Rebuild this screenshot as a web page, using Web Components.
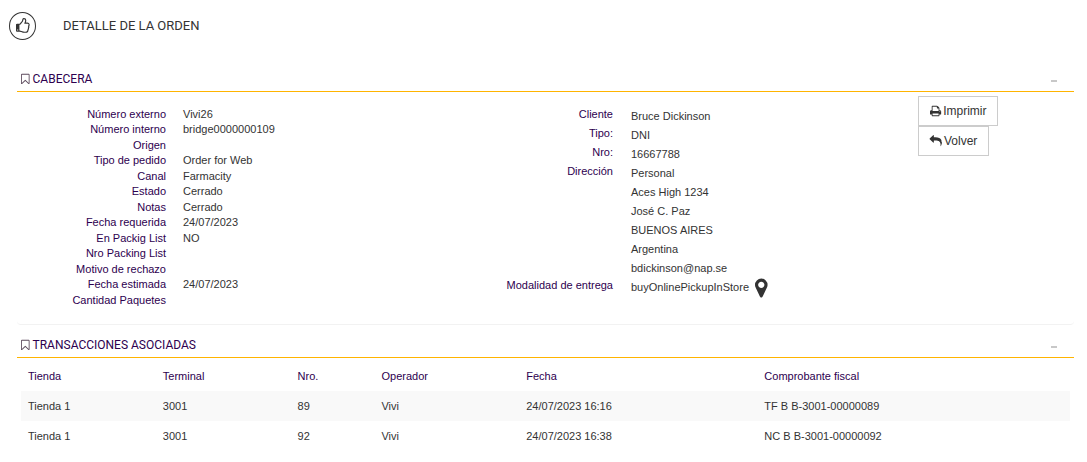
<!DOCTYPE html>
<html lang="es">
<head>
<meta charset="utf-8">
<title>Detalle de la orden</title>
<style>
	body {
		margin: 0;
		background: #fff;
		color: #333;
		font: 11px/15px "Liberation Sans", Arial, sans-serif;
		--label: #2d004f;
		--accent: #ffb400;
	}
	main {
		padding: 0 13px 0 17px;
	}
</style>
</head>
<body>
<page-title icon="thumbs">DETALLE DE LA ORDEN</page-title>
<main>
	<info-panel heading="CABECERA">
		<order-header></order-header>
	</info-panel>
	<info-panel heading="TRANSACCIONES ASOCIADAS">
		<transaction-table></transaction-table>
	</info-panel>
</main>

<script>
const ICONS = {
	thumbs: ['0 0 1536 1792', 'M256 1344q0-26-19-45t-45-19-45 19-19 45 19 45 45 19 45-19 19-45zm1152-576q0-51-39-89.5t-89-38.5h-352q0-58 48-159.5t48-160.5q0-98-32-145t-128-47q-26 26-38 85t-30.5 125.5-59.5 109.5q-22 23-77 91-4 5-23 30t-31.5 41-34.5 42.5-40 44-38.5 35.5-40 27-35.5 9h-32v640h32q13 0 31.5 3t33 6.5 38 11 35 11.5 35.5 12.5 29 10.5q211 73 342 73h121q192 0 192-167 0-26-5-56 30-16 47.5-52.5t17.5-73.5-18-69q53-50 53-119 0-25-10-55.5t-25-47.5q32-1 53.5-47t21.5-81zm128-1q0 89-49 163 9 33 9 69 0 77-38 144 3 21 3 43 0 101-60 178 1 139-85 219.5t-227 80.5h-129q-96 0-189.5-22.5t-216.5-65.5q-116-40-138-40h-288q-53 0-90.5-37.5t-37.5-90.5v-640q0-53 37.5-90.5t90.5-37.5h274q36-24 137-155 58-75 107-128 24-25 35.5-85.5t30.5-126.5 62-108q39-37 90-37 84 0 151 32.5t102 101.5 35 186q0 93-48 192h176q104 0 180 76t76 179z'],
	bookmark: ['0 0 1280 1792', 'M1152 256h-1024v1242l423-406 89-85 89 85 423 406v-1242zm12-128q23 0 44 9 33 13 52.5 41t19.5 62v1289q0 34-19.5 62t-52.5 41q-19 8-44 8-48 0-83-32l-441-424-441 424q-36 33-83 33-23 0-44-9-33-13-52.5-41t-19.5-62v-1289q0-34 19.5-62t52.5-41q21-9 44-9h1048z'],
	print: ['0 0 1664 1792', 'M384 1536h896v-256h-896v256zm0-640h896v-384h-160q-40 0-68-28t-28-68v-160h-640v640zm1152 64q0-26-19-45t-45-19-45 19-19 45 19 45 45 19 45-19 19-45zm128 0v416q0 13-9.5 22.5t-22.5 9.5h-224v160q0 40-28 68t-68 28h-960q-40 0-68-28t-28-68v-160h-224q-13 0-22.5-9.5t-9.5-22.5v-416q0-79 56.5-135.5t135.5-56.5h64v-544q0-40 28-68t68-28h672q40 0 88 20t76 48l152 152q28 28 48 76t20 88v256h64q79 0 135.5 56.5t56.5 135.5z'],
	reply: ['0 0 1792 1792', 'M1792 1120q0 166-127 451-3 7-10.5 24t-13.5 30-13 22q-12 17-28 17-15 0-23.5-10t-8.5-25q0-9 2.5-26.5t2.5-23.5q5-68 5-123 0-112-19.5-200.5t-54-153.5-89-112-117.5-79.5-147-47-164-24.5-188-7h-224v256q0 26-19 45t-45 19-45-19l-512-512q-19-19-19-45t19-45l512-512q19-19 45-19t45 19 19 45v256h224q713 0 875 403 53 134 53 333z'],
	marker: ['0 0 1024 1792', 'M768 640q0-106-75-181t-181-75-181 75-75 181 75 181 181 75 181-75 75-181zm256 0q0 109-33 179l-364 774q-16 33-47.5 52t-67.5 19-67.5-19-46.5-52l-365-774q-33-70-33-179 0-212 150-362t362-150 362 150 150 362z'],
};

const ORDER = [
	['Número externo', 'Vivi26'],
	['Número interno', 'bridge0000000109'],
	['Origen', ''],
	['Tipo de pedido', 'Order for Web'],
	['Canal', 'Farmacity'],
	['Estado', 'Cerrado'],
	['Notas', 'Cerrado'],
	['Fecha requerida', '24/07/2023'],
	['En Packig List', 'NO'],
	['Nro Packing List', ''],
	['Motivo de rechazo', ''],
	['Fecha estimada', '24/07/2023'],
	['Cantidad Paquetes', ''],
];

const CUSTOMER = [
	['Cliente', 'Bruce Dickinson'],
	['Tipo:', 'DNI'],
	['Nro:', '16667788'],
	['Dirección', 'Personal', 'Aces High 1234', 'José C. Paz', 'BUENOS AIRES', 'Argentina', 'bdickinson@nap.se'],
	['Modalidad de entrega', 'buyOnlinePickupInStore<fa-icon name="marker"></fa-icon>'],
];

const COLUMNS = ['Tienda', 'Terminal', 'Nro.', 'Operador', 'Fecha', 'Comprobante fiscal'];

const TRANSACTIONS = [
	['Tienda 1', '3001', '89', 'Vivi', '24/07/2023 16:16', 'TF B B-3001-00000089'],
	['Tienda 1', '3001', '92', 'Vivi', '24/07/2023 16:38', 'NC B B-3001-00000092'],
];

class FaIcon extends HTMLElement {
	constructor() {
		super();
		this.attachShadow({ mode: 'open' });
	}

	connectedCallback() {
		const [viewBox, path] = ICONS[this.getAttribute('name')];
		this.shadowRoot.innerHTML = /* html */`
<style>
	:host {
		display: inline-flex;
		flex: none;
		height: 12px;
	}
	svg {
		height: 100%;
		fill: currentColor;
		overflow: visible;
	}
</style>
<svg viewBox="${viewBox}" aria-hidden="true"><path d="${path}"/></svg>
`;
	}
}

class PageTitle extends HTMLElement {
	constructor() {
		super();
		this.attachShadow({ mode: 'open' }).innerHTML = /* html */`
<style>
	:host {
		display: flex;
		align-items: center;
		gap: 27px;
		padding: 12px 9px 25px;
	}
	.badge {
		display: flex;
		align-items: center;
		justify-content: center;
		box-sizing: border-box;
		width: 27px;
		height: 28px;
		border: 1px solid #333;
		border-radius: 50%;
	}
	fa-icon {
		height: 16px;
	}
	h1 {
		margin: 0;
		font: 400 13px/20px Roboto, sans-serif;
	}
</style>
<span class="badge"><fa-icon name="${this.getAttribute('icon') || 'thumbs'}"></fa-icon></span>
<h1><slot></slot></h1>
`;
	}
}

class InfoPanel extends HTMLElement {
	constructor() {
		super();
		this.attachShadow({ mode: 'open' });
	}

	connectedCallback() {
		this.shadowRoot.innerHTML = /* html */`
<style>
	:host {
		display: block;
	}
	section {
		border-bottom: 1px solid #f2f2f2;
		border-radius: 4px;
	}
	header {
		display: flex;
		align-items: center;
		justify-content: space-between;
		box-sizing: border-box;
		height: 27px;
		padding: 2px 17px 0 4px;
		border-bottom: 1px solid var(--accent);
	}
	:host(:not(:first-child)) header {
		height: 33px;
		padding-top: 8px;
	}
	:host(:last-child) section {
		border-bottom: none;
	}
	h2 {
		display: flex;
		align-items: center;
		gap: 3px;
		margin: 0;
		color: var(--label);
		font: 400 12px/16px Roboto, sans-serif;
	}
	h2 fa-icon {
		color: #5c4a5c;
	}
	button {
		display: flex;
		align-items: center;
		width: 6px;
		height: 16px;
		padding: 3px 0 0;
		border: none;
		background: none;
		cursor: pointer;
	}
	button::before {
		content: "";
		flex: 1;
		height: 2px;
		background: #c8c8c8;
	}
	[hidden] {
		display: none;
	}
</style>
<section>
	<header>
		<h2><fa-icon name="bookmark"></fa-icon>${this.getAttribute('heading')}</h2>
		<button type="button" aria-label="Contraer" aria-expanded="true"></button>
	</header>
	<div class="body"><slot></slot></div>
</section>
`;
		const button = this.shadowRoot.querySelector('button');
		const body = this.shadowRoot.querySelector('.body');
		button.addEventListener('click', () => {
			body.hidden = !body.hidden;
			button.setAttribute('aria-expanded', String(!body.hidden));
		});
	}
}

class OrderHeader extends HTMLElement {
	constructor() {
		super();
		const group = ([label, ...values]) => `<dt>${label}</dt>${values.map((value) => `<dd>${value}</dd>`).join('')}`;
		this.attachShadow({ mode: 'open' }).innerHTML = /* html */`
<style>
	:host {
		display: grid;
		grid-template-columns: 447fr 454fr 156fr;
		padding: 4px 0 16px;
	}
	dl {
		display: grid;
		grid-template-columns: 149px 1fr;
		column-gap: 17px;
		margin: 11px 0 0;
	}
	/* the order list spreads its rows over the height of the row */
	.order {
		grid-auto-rows: 1fr;
	}
	.customer {
		grid-auto-rows: 19px;
		column-gap: 18px;
		padding-bottom: 11px;
	}
	dt {
		grid-column: 1;
		color: var(--label);
		text-align: right;
	}
	dd {
		grid-column: 2;
		margin: 0;
	}
	.customer dd {
		display: flex;
		align-items: center;
		gap: 6px;
		line-height: 19px;
	}
	dd fa-icon {
		height: 22px;
	}
	.actions {
		display: flex;
		flex-direction: column;
		align-items: flex-start;
	}
	button {
		display: flex;
		align-items: center;
		gap: 2px;
		height: 30px;
		padding: 0 11px;
		border: 1px solid #ccc;
		background: #fff;
		color: #333;
		font: 12px/16px "Liberation Sans", Arial, sans-serif;
		cursor: pointer;
	}
</style>
<dl class="order">${ORDER.map(group).join('')}</dl>
<dl class="customer">${CUSTOMER.map(group).join('')}</dl>
<div class="actions">
	<button type="button"><fa-icon name="print"></fa-icon>Imprimir</button>
	<button type="button"><fa-icon name="reply"></fa-icon>Volver</button>
</div>
`;
	}
}

class TransactionTable extends HTMLElement {
	constructor() {
		super();
		const row = (cells) => `<tr>${cells.map((cell) => `<td>${cell}</td>`).join('')}</tr>`;
		this.attachShadow({ mode: 'open' }).innerHTML = /* html */`
<style>
	:host {
		display: block;
		padding: 3px 4px;
	}
	table {
		width: 100%;
		border-collapse: collapse;
		table-layout: fixed;
	}
	th, td {
		box-sizing: border-box;
		height: 30px;
		padding: 0 7px;
		text-align: left;
		font-weight: 400;
	}
	th {
		color: var(--label);
	}
	th:nth-child(1), th:nth-child(2) { width: 12.85%; }
	th:nth-child(3) { width: 8%; }
	th:nth-child(4) { width: 13.8%; }
	th:nth-child(5) { width: 22.7%; }
	tbody tr:nth-child(odd) {
		background: #f9f9f9;
	}
</style>
<table>
	<thead><tr>${COLUMNS.map((name) => `<th scope="col">${name}</th>`).join('')}</tr></thead>
	<tbody>${TRANSACTIONS.map(row).join('')}</tbody>
</table>
`;
	}
}

customElements.define('fa-icon', FaIcon);
customElements.define('page-title', PageTitle);
customElements.define('info-panel', InfoPanel);
customElements.define('order-header', OrderHeader);
customElements.define('transaction-table', TransactionTable);
</script>
</body>
</html>
